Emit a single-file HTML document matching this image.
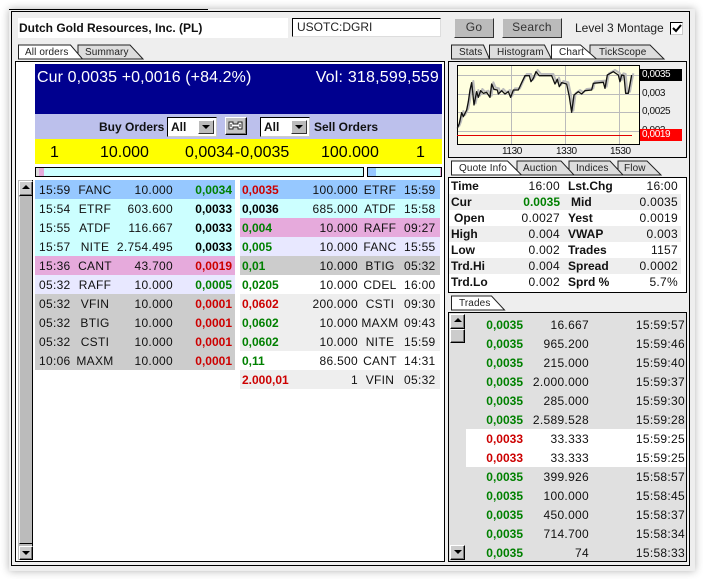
<!DOCTYPE html>
<html><head><meta charset="utf-8"><style>
html,body{margin:0;padding:0;width:703px;height:579px;overflow:hidden;background:#fff}
*{box-sizing:border-box}
body{font:12px "Liberation Sans",sans-serif;color:#111;position:relative}
div,span,svg{position:absolute}
.r{height:19px;line-height:19px;letter-spacing:.3px;white-space:nowrap}
.r span{top:1px}
.b{font-weight:bold;letter-spacing:0}
.g{color:#008000}.x{color:#cc0000}.k{color:#000}
.a{right:auto}
.L .t{left:4px}.L .n{left:40px;width:40px;text-align:center}.L .q{right:62px}.L .p{right:3px}
.R .p{left:2px}.R .q{right:82px}.R .n{left:120px;width:40px;text-align:center}.R .t{left:164px}
.T .p{left:0;width:57px;text-align:right}.T .q{left:60px;width:63px;text-align:right}.T .t{right:1px}
.Q{left:449px;width:232px;height:16px;line-height:16px;letter-spacing:.3px;white-space:nowrap}
.Q span{top:0}.Q .l{font-weight:bold;letter-spacing:0;left:2px}.Q .m{font-weight:bold;letter-spacing:0;left:119px}
.Q .v{right:121px}.Q .w{right:3px}
.bev{background:#bbb;border:1px solid;border-color:#fff #000 #000 #fff;box-shadow:inset -1px -1px 0 #777}
.tab{font-size:10px;letter-spacing:.12px;line-height:14px;white-space:nowrap;color:#222}
.sel{background:#fff;border:1px solid #000;border-right-color:#ccc;border-bottom-color:#ccc;height:20px}
.sel b{position:absolute;left:3px;top:1px;line-height:16px}
.sel i{position:absolute;right:2px;top:2px;width:16px;height:14px;background:#bbb;border:1px solid;border-color:#fff #333 #333 #fff}
.sel i:after,.up:after,.dn:after{content:"";position:absolute;left:50%;margin-left:-4px;border-left:4px solid transparent;border-right:4px solid transparent}
.sel i:after,.dn:after{top:4px;border-top:4px solid #000}
.up:after{top:3px;border-bottom:4px solid #000}
.big{font-size:16px;white-space:nowrap;line-height:20px;letter-spacing:.1px}
.big.k{letter-spacing:0}
.btn{background:#bbb;border:1px solid;border-color:#eee #333 #333 #eee;text-align:center;line-height:17px;letter-spacing:.3px;color:#333;font-size:12px}
.lab{font-size:10px;letter-spacing:-.4px;white-space:nowrap;left:642px}
</style></head><body>
<div style="left:9px;top:9px;width:686px;height:562px;background:#eee;box-shadow:0 0 8px rgba(0,0,0,.3)"></div>
<div style="left:9px;top:9px;width:199px;height:1px;background:#000"></div>
<div style="left:11px;top:11px;width:679px;height:555px;border:1px solid #000"></div>

<div style="left:18px;top:18px;width:270px;height:20px;background:#fff"></div>
<div class="b" style="left:19px;top:18px;line-height:20px;white-space:nowrap;color:#111">Dutch Gold Resources, Inc. (PL)</div>
<div style="left:292px;top:18px;width:149px;height:19px;background:#fff;border:1px solid;border-color:#000 #ddd #ddd #000;line-height:17px;padding-left:4px;color:#222">USOTC:DGRI</div>
<div class="btn" style="left:454px;top:18px;width:40px;height:20px">Go</div>
<div class="btn" style="left:502px;top:18px;width:60px;height:20px">Search</div>
<div style="left:575px;top:18px;line-height:20px;white-space:nowrap;color:#222">Level 3 Montage</div>
<div style="left:670px;top:22px;width:13px;height:13px;background:#fff;border:1px solid;border-color:#000 #ccc #ccc #000"></div>

<svg width="703" height="579" style="left:0;top:0">
<path d="M673 28l3 3 5-6" fill="none" stroke="#000" stroke-width="2"/>
<g stroke="#222" stroke-width="1">
<path d="M78 59V45h52l13 14z" fill="#ddd"/><path d="M18.500 59V45h52l12 14z" fill="#fff"/>
<path d="M590 59V45h60l14 14z" fill="#ddd"/>
<path d="M489.500 59V45h55l7 14z" fill="#ddd"/>
<path d="M451.500 59V45h32l6 14z" fill="#ddd"/>
<path d="M551.500 59V45h29l16 14z" fill="#fff"/>
<path d="M618 175V161h29l14 14z" fill="#ddd"/>
<path d="M569 175V161h41l13 14z" fill="#ddd"/>
<path d="M517 175V161h44l13 14z" fill="#ddd"/>
<path d="M451.500 175V161h56l14 14z" fill="#fff"/>
<path d="M451.500 310v-14h40l13 14z" fill="#fff"/>
</g>
</svg>
<div class="tab" style="left:25px;top:46px">All orders</div>
<div class="tab" style="left:85px;top:46px">Summary</div>
<div class="tab" style="left:459px;top:46px">Stats</div>
<div class="tab" style="left:497px;top:46px">Histogram</div>
<div class="tab" style="left:559px;top:46px">Chart</div>
<div class="tab" style="left:599px;top:46px">TickScope</div>
<div class="tab" style="left:459px;top:162px">Quote Info</div>
<div class="tab" style="left:523px;top:162px">Auction</div>
<div class="tab" style="left:576px;top:162px">Indices</div>
<div class="tab" style="left:624px;top:162px">Flow</div>
<div class="tab" style="left:459px;top:297px">Trades</div>

<div style="left:15px;top:61px;width:430px;height:501px;background:#fff;border:1px solid #000"></div>
<div style="left:35px;top:64px;width:407px;height:50px;background:#00008f"></div>
<div class="big" style="left:37px;top:68px;color:#fff">Cur 0,0035 +0,0016 (+84.2%)</div>
<div class="big" style="right:264px;top:68px;color:#fff;letter-spacing:.2px">Vol: 318,599,559</div>
<div style="left:35px;top:114px;width:407px;height:25px;background:#bcc0ec"></div>
<div class="b" style="left:99px;top:118px;line-height:18px;white-space:nowrap">Buy Orders</div>
<div class="b" style="left:314px;top:118px;line-height:18px;white-space:nowrap">Sell Orders</div>
<div class="sel" style="left:167px;top:117px;width:50px"><b>All</b><i></i></div>
<div class="sel" style="left:260px;top:117px;width:50px"><b>All</b><i></i></div>
<div class="bev" style="left:225px;top:117px;width:22px;height:18px;background:#c4c4c4"></div>
<svg width="16" height="10" style="left:228px;top:121px"><path d="M1 1h4v2h5V1h4v7h-4V6H5v2H1zM3 3v3M12 3v3" fill="#fff" stroke="#222"/></svg>

<div style="left:35px;top:139px;width:407px;height:25px;background:#ff0"></div>
<div class="big k" style="left:50px;top:143px">1</div>
<div class="big k" style="left:100px;top:143px">10.000</div>
<div class="big k" style="left:185px;top:143px">0,0034</div>
<div class="big k" style="left:235px;top:143px">-0,0035</div>
<div class="big k" style="left:321px;top:143px">100.000</div>
<div class="big k" style="left:416px;top:143px">1</div>

<div style="left:35px;top:167px;width:329px;height:10px;background:#cff;border:1px solid #000"></div>
<div style="left:36px;top:168px;width:8px;height:8px;background:linear-gradient(90deg,#ddd 0,#ddd 3px,#e6aadc 3px)"></div>
<div style="left:367px;top:167px;width:75px;height:10px;background:#cff;border:1px solid #000"></div>
<div style="left:368px;top:168px;width:8px;height:8px;background:#96c8ff"></div>
<div style="left:440px;top:168px;width:1px;height:8px;background:#e6aadc"></div>

<div style="left:18px;top:180px;width:15px;height:380px;background:#bbb;border-right:1px solid #000"></div>
<div class="bev up" style="left:19px;top:181px;width:14px;height:15px;background:#ccc"></div>
<div style="left:19px;top:197px;width:13px;height:347px;background:#bbb;border-left:1px solid #eee;border-bottom:1px solid #000"></div>
<div class="bev dn" style="left:19px;top:546px;width:14px;height:14px;background:#ccc"></div>

<div class="r L" style="left:35px;top:180px;width:200px;background:#96c8ff"><span class="t">15:59</span><span class="n">FANC</span><span class="q">10.000</span><span class="p b g">0,0034</span></div>
<div class="r L" style="left:35px;top:199px;width:200px;background:#cff"><span class="t">15:54</span><span class="n">ETRF</span><span class="q">603.600</span><span class="p b k">0,0033</span></div>
<div class="r L" style="left:35px;top:218px;width:200px;background:#cff"><span class="t">15:55</span><span class="n">ATDF</span><span class="q">116.667</span><span class="p b k">0,0033</span></div>
<div class="r L" style="left:35px;top:237px;width:200px;background:#cff"><span class="t">15:57</span><span class="n">NITE</span><span class="q">2.754.495</span><span class="p b k">0,0033</span></div>
<div class="r L" style="left:35px;top:256px;width:200px;background:#e6aadc"><span class="t">15:36</span><span class="n">CANT</span><span class="q">43.700</span><span class="p b x">0,0019</span></div>
<div class="r L" style="left:35px;top:275px;width:200px;background:#e8e8ff"><span class="t">05:32</span><span class="n">RAFF</span><span class="q">10.000</span><span class="p b g">0,0005</span></div>
<div class="r L" style="left:35px;top:294px;width:200px;background:#ccc"><span class="t">05:32</span><span class="n">VFIN</span><span class="q">10.000</span><span class="p b x">0,0001</span></div>
<div class="r L" style="left:35px;top:313px;width:200px;background:#ccc"><span class="t">05:32</span><span class="n">BTIG</span><span class="q">10.000</span><span class="p b x">0,0001</span></div>
<div class="r L" style="left:35px;top:332px;width:200px;background:#ccc"><span class="t">05:32</span><span class="n">CSTI</span><span class="q">10.000</span><span class="p b x">0,0001</span></div>
<div class="r L" style="left:35px;top:351px;width:200px;background:#ccc"><span class="t">10:06</span><span class="n">MAXM</span><span class="q">10.000</span><span class="p b x">0,0001</span></div>

<div class="r R" style="left:240px;top:180px;width:200px;background:#96c8ff"><span class="p b x">0,0035</span><span class="q">100.000</span><span class="n">ETRF</span><span class="t">15:59</span></div>
<div class="r R" style="left:240px;top:199px;width:200px;background:#cff"><span class="p b k">0,0036</span><span class="q">685.000</span><span class="n">ATDF</span><span class="t">15:58</span></div>
<div class="r R" style="left:240px;top:218px;width:200px;background:#e6aadc"><span class="p b g">0,004</span><span class="q">10.000</span><span class="n">RAFF</span><span class="t">09:27</span></div>
<div class="r R" style="left:240px;top:237px;width:200px;background:#e8e8ff"><span class="p b g">0,005</span><span class="q">10.000</span><span class="n">FANC</span><span class="t">15:55</span></div>
<div class="r R" style="left:240px;top:256px;width:200px;background:#ccc"><span class="p b g">0,01</span><span class="q">10.000</span><span class="n">BTIG</span><span class="t">05:32</span></div>
<div class="r R" style="left:240px;top:275px;width:200px;background:#fff"><span class="p b g">0,0205</span><span class="q">10.000</span><span class="n">CDEL</span><span class="t">16:00</span></div>
<div class="r R" style="left:240px;top:294px;width:200px;background:#eee"><span class="p b x">0,0602</span><span class="q">200.000</span><span class="n">CSTI</span><span class="t">09:30</span></div>
<div class="r R" style="left:240px;top:313px;width:200px;background:#eee"><span class="p b g">0,0602</span><span class="q">10.000</span><span class="n">MAXM</span><span class="t">09:43</span></div>
<div class="r R" style="left:240px;top:332px;width:200px;background:#eee"><span class="p b g">0,0602</span><span class="q">10.000</span><span class="n">NITE</span><span class="t">15:59</span></div>
<div class="r R" style="left:240px;top:351px;width:200px;background:#fff"><span class="p b g">0,11</span><span class="q">86.500</span><span class="n">CANT</span><span class="t">14:31</span></div>
<div class="r R" style="left:240px;top:370px;width:200px;background:#eee"><span class="p b x">2.000,01</span><span class="q">1</span><span class="n">VFIN</span><span class="t">05:32</span></div>

<div style="left:448px;top:61px;width:239px;height:97px;border:1px solid #000"></div>
<svg width="703" height="579" style="left:0;top:0">
<rect x="457.500" y="65.500" width="182" height="79" fill="#ffffdf" stroke="#000"/>
<path d="M458 75.500h181M458 94.500h181M458 112.500h181M458 131.500h181M511.500 66v78M565.500 66v78M619.500 66v78" stroke="#bbb" fill="none"/>
<path d="M457 135.500h175" stroke="#e00000" fill="none"/>
<g transform="translate(450 60) scale(.3333)" fill="none" stroke-linejoin="round">
<path transform="translate(5 -5)" stroke="#bbb" stroke-width="6" d="M22 205L28 190 35 158 40 170 50 150 55 125 60 90 65 68 68 95 72 135 80 95 85 112 92 92 100 100 110 97 120 112 125 72 132 88 142 90 145 102 155 92 165 102 175 95 182 112 190 90 205 90 215 68 225 47 238 47 243 65 250 55 258 35 268 47 305 47 315 72 322 58 328 80 335 68 350 72 358 110 365 157 372 105 385 95 395 102 405 92 425 90 430 70 460 67 465 85 472 45 490 35 505 45 510 65 515 45 522 47 527 100 535 100 545 45"/>
<path stroke="#111" stroke-width="4" d="M22 205L28 190 35 158 40 170 50 150 55 125 60 90 65 68 68 95 72 135 80 95 85 112 92 92 100 100 110 97 120 112 125 72 132 88 142 90 145 102 155 92 165 102 175 95 182 112 190 90 205 90 215 68 225 47 238 47 243 65 250 55 258 35 268 47 305 47 315 72 322 58 328 80 335 68 350 72 358 110 365 157 372 105 385 95 395 102 405 92 425 90 430 70 460 67 465 85 472 45 490 35 505 45 510 65 515 45 522 47 527 100 535 100 545 45"/>
</g>
</svg>
<div class="lab" style="top:87px;line-height:14px">0,003</div>
<div class="lab" style="top:105px;line-height:14px">0,0025</div>
<div class="lab" style="top:124px;line-height:14px">0,002</div>
<div style="left:640px;top:69px;width:42px;height:12px;background:#000"></div>
<div class="lab" style="top:68px;line-height:14px;color:#fff">0,0035</div>
<div style="left:640px;top:129px;width:42px;height:12px;background:#f00"></div>
<div class="lab" style="top:128px;line-height:14px;color:#fff">0,0019</div>
<div class="lab" style="left:502px;top:145px;line-height:13px">1130</div>
<div class="lab" style="left:556px;top:145px;line-height:13px">1330</div>
<div class="lab" style="left:610px;top:145px;line-height:13px">1530</div>

<div style="left:448px;top:177px;width:239px;height:116px;background:#fff;border:1px solid #000"></div>
<div class="Q" style="top:178px"><span class="l">Time</span><span class="v">16:00</span><span class="m">Lst.Chg</span><span class="w">16:00</span></div>
<div class="Q" style="top:194px;background:#eee"><span class="l">Cur</span><span class="v b g">0.0035</span><span class="m" style="left:122px">Mid</span><span class="w">0.0035</span></div>
<div class="Q" style="top:210px"><span class="l" style="left:5px">Open</span><span class="v">0.0027</span><span class="m">Yest</span><span class="w">0.0019</span></div>
<div class="Q" style="top:226px;background:#eee"><span class="l">High</span><span class="v">0.004</span><span class="m">VWAP</span><span class="w">0.003</span></div>
<div class="Q" style="top:242px"><span class="l">Low</span><span class="v">0.002</span><span class="m">Trades</span><span class="w">1157</span></div>
<div class="Q" style="top:258px;background:#eee"><span class="l">Trd.Hi</span><span class="v">0.004</span><span class="m">Spread</span><span class="w">0.0002</span></div>
<div class="Q" style="top:274px"><span class="l">Trd.Lo</span><span class="v">0.002</span><span class="m">Sprd %</span><span class="w">5.7%</span></div>

<div style="left:448px;top:312px;width:239px;height:250px;background:#e0e0e0;border:1px solid #000"></div>
<div style="left:466px;top:315px;width:220px;height:246px;background:#fff"></div>
<div class="bev up" style="left:450px;top:314px;width:15px;height:15px;background:#ccc"></div>
<div class="bev" style="left:450px;top:329px;width:15px;height:14px;background:#ccc"></div>
<div class="bev dn" style="left:450px;top:545px;width:15px;height:15px;background:#ccc"></div>
<div class="r T" style="left:466px;top:315px;width:220px;background:#e0e0e0"><span class="p b g">0,0035</span><span class="q">16.667</span><span class="t">15:59:57</span></div>
<div class="r T" style="left:466px;top:334px;width:220px;background:#e0e0e0"><span class="p b g">0,0035</span><span class="q">965.200</span><span class="t">15:59:46</span></div>
<div class="r T" style="left:466px;top:353px;width:220px;background:#e0e0e0"><span class="p b g">0,0035</span><span class="q">215.000</span><span class="t">15:59:40</span></div>
<div class="r T" style="left:466px;top:372px;width:220px;background:#e0e0e0"><span class="p b g">0,0035</span><span class="q">2.000.000</span><span class="t">15:59:37</span></div>
<div class="r T" style="left:466px;top:391px;width:220px;background:#e0e0e0"><span class="p b g">0,0035</span><span class="q">285.000</span><span class="t">15:59:30</span></div>
<div class="r T" style="left:466px;top:410px;width:220px;background:#e0e0e0"><span class="p b g">0,0035</span><span class="q">2.589.528</span><span class="t">15:59:28</span></div>
<div class="r T" style="left:466px;top:429px;width:220px;background:#fff"><span class="p b x">0,0033</span><span class="q">33.333</span><span class="t">15:59:25</span></div>
<div class="r T" style="left:466px;top:448px;width:220px;background:#fff"><span class="p b x">0,0033</span><span class="q">33.333</span><span class="t">15:59:25</span></div>
<div class="r T" style="left:466px;top:467px;width:220px;background:#e0e0e0"><span class="p b g">0,0035</span><span class="q">399.926</span><span class="t">15:58:57</span></div>
<div class="r T" style="left:466px;top:486px;width:220px;background:#e0e0e0"><span class="p b g">0,0035</span><span class="q">100.000</span><span class="t">15:58:45</span></div>
<div class="r T" style="left:466px;top:505px;width:220px;background:#e0e0e0"><span class="p b g">0,0035</span><span class="q">450.000</span><span class="t">15:58:37</span></div>
<div class="r T" style="left:466px;top:524px;width:220px;background:#e0e0e0"><span class="p b g">0,0035</span><span class="q">714.700</span><span class="t">15:58:34</span></div>
<div class="r T" style="left:466px;top:543px;width:220px;height:18px;background:#e0e0e0"><span class="p b g">0,0035</span><span class="q">74</span><span class="t">15:58:33</span></div>
</body></html>
